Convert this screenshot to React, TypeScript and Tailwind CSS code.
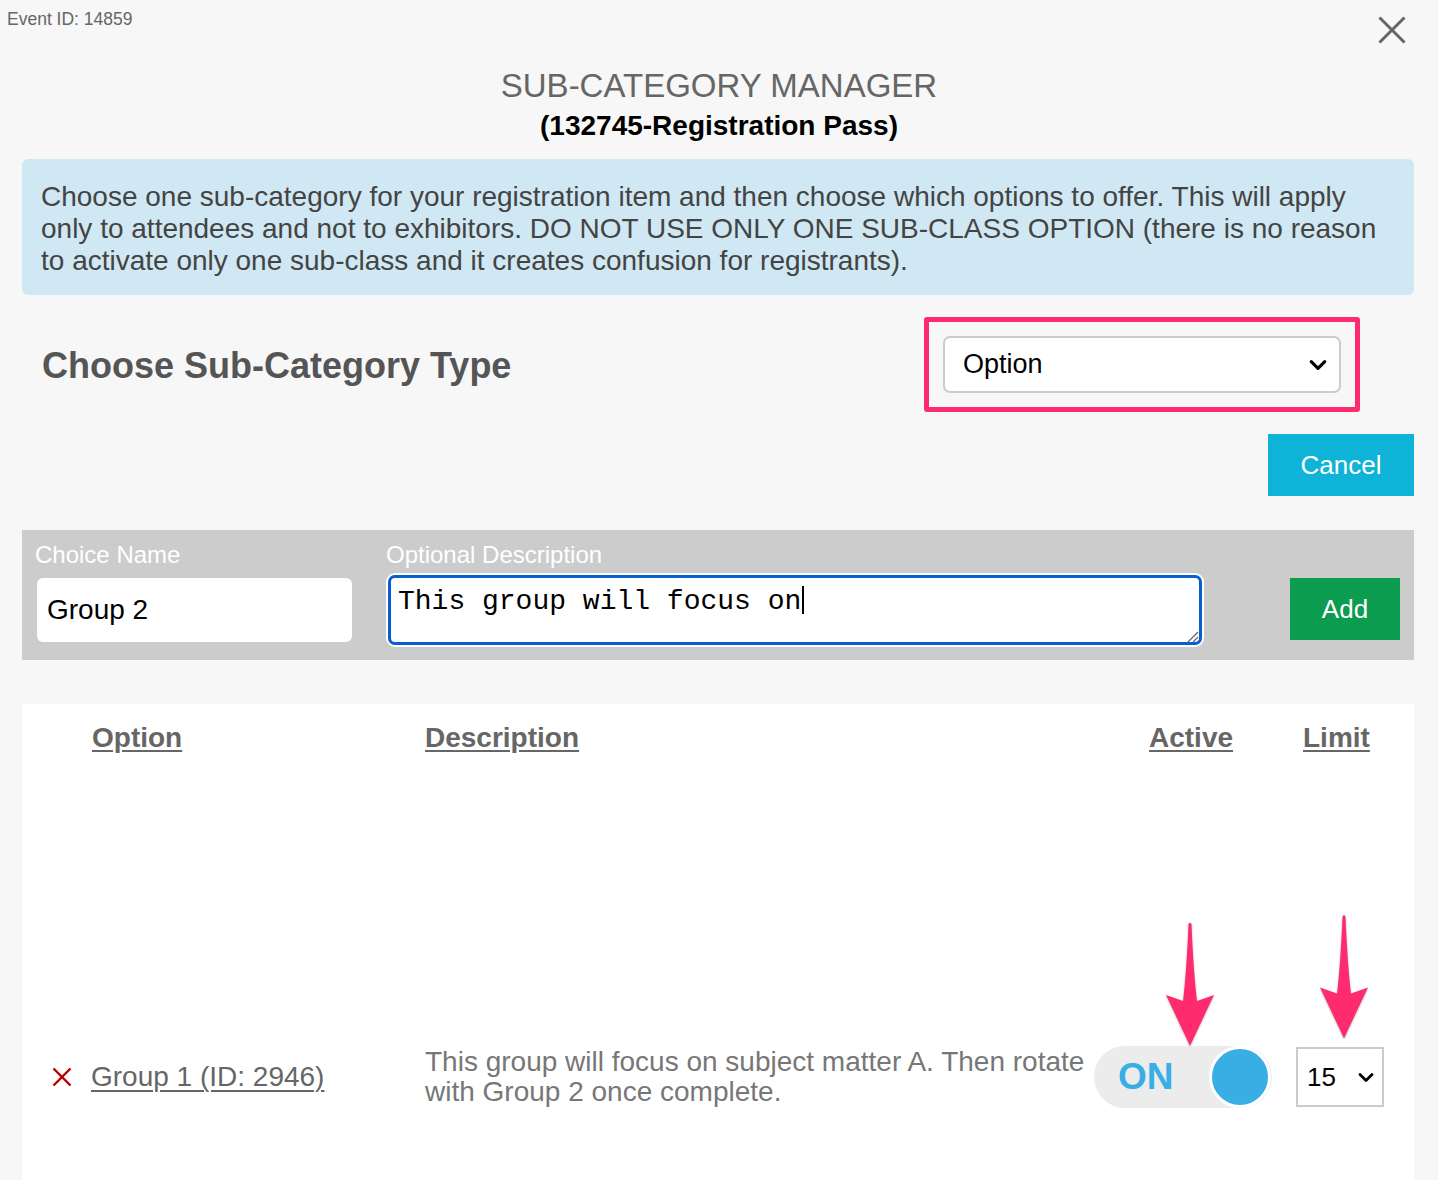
import React from "react";

const Chevron = ({ className = "" }: { className?: string }) => (
  <svg viewBox="0 0 16 10" className={className} fill="none">
    <polyline points="2,2 8,8 14,2" stroke="#000" strokeWidth="2.8" strokeLinecap="round" strokeLinejoin="round" />
  </svg>
);

const Arrow = ({ className = "" }: { className?: string }) => (
  <svg viewBox="0 0 48 125" className={className} style={{ filter: "drop-shadow(0 1px 1px rgba(0,0,0,0.25))" }}>
    <path
      d="M22.5 2 Q24 -0.5 25.5 2 Q27.5 50 31 79 L48 73 L24 124 L0 73 L17 79 Q20.5 50 22.5 2 Z"
      fill="#fe2c6e"
    />
  </svg>
);

export default function App() {
  return (
    <div
      className="relative w-[1438px] h-[1180px] overflow-hidden bg-[#f7f7f7]"
      style={{ fontFamily: '"Liberation Sans", Arial, sans-serif' }}
    >
      {/* header row */}
      <div className="flex justify-between items-start">
        <div className="pl-[7px] pt-[9px] text-[17.5px] leading-[20px] text-[#666]">Event ID: 14859</div>
        <button className="mt-[16px] mr-[32px] w-[28px] h-[28px]">
          <svg viewBox="0 0 28 28" className="w-[28px] h-[28px]">
            <line x1="1.5" y1="1.5" x2="26.5" y2="26.5" stroke="#666" strokeWidth="3" />
            <line x1="26.5" y1="1.5" x2="1.5" y2="26.5" stroke="#666" strokeWidth="3" />
          </svg>
        </button>
      </div>

      {/* title */}
      <div className="mt-[23px] text-center">
        <div className="text-[33px] leading-[38px] text-[#666]">SUB-CATEGORY MANAGER</div>
        <div className="mt-[4px] text-[28px] leading-[33px] font-bold text-black">(132745-Registration Pass)</div>
      </div>

      <div className="pl-[22px] pr-[24px]">
        {/* info box */}
        <div className="mt-[17px] h-[136px] rounded-[6px] bg-[#d0e8f3] pl-[19px] pr-[18px] pt-[22px] text-[28px] leading-[32px] text-[#444]">
          Choose one sub-category for your registration item and then choose which options to offer. This will apply only to attendees and not to exhibitors. DO NOT USE ONLY ONE SUB-CLASS OPTION (there is no reason to activate only one sub-class and it creates confusion for registrants).
        </div>

        {/* choose type */}
        <div className="mt-[22px] flex items-center justify-between">
          <div className="pl-[20px] pt-[2px] text-[36px] font-bold text-[#555]">Choose Sub-Category Type</div>
          <div className="mr-[54px] w-[436px] h-[95px] rounded-[3px] border-[5px] border-[#fe2c6e] p-[14px]">
            <div className="flex h-full items-center justify-between rounded-[7px] border-2 border-[#ccc] bg-white pl-[18px] pr-[12px]">
              <span className="text-[27px] text-black">Option</span>
              <Chevron className="w-[18px] h-[12px]" />
            </div>
          </div>
        </div>

        {/* cancel */}
        <div className="mt-[22px] flex justify-end">
          <button className="h-[62px] w-[146px] bg-[#10b3d8] text-[26px] text-white">Cancel</button>
        </div>

        {/* form bar */}
        <div className="mt-[34px] flex h-[130px] items-start bg-[#cccccc] pl-[13px] pt-[12px]">
          <div className="w-[317px]">
            <div className="text-[24px] leading-[26px] text-white">Choice Name</div>
            <div className="ml-[2px] mt-[10px] flex h-[64px] w-[315px] items-center rounded-[6px] bg-white pl-[10px] text-[28px] text-black">
              Group 2
            </div>
          </div>
          <div className="ml-[34px] w-[818px]">
            <div className="text-[24px] leading-[26px] text-white">Optional Description</div>
            <div className="relative mt-[5px] h-[74px] w-[818px] rounded-[9px] border-2 border-white">
              <div className="h-full w-full rounded-[7px] border-[3px] border-[#0a5fd0] bg-white pl-[7px] pt-[3px]">
                <span
                  className="text-[28px] leading-[30px] text-black"
                  style={{ fontFamily: '"Liberation Mono", "Courier New", monospace' }}
                >
                  This group will focus on
                </span>
                <span className="ml-[1px] inline-block h-[28px] w-[1.5px] translate-y-[5px] bg-black" />
              </div>
              <svg viewBox="0 0 14 14" className="absolute bottom-[2px] right-[3px] w-[14px] h-[14px]">
                <line x1="13" y1="3" x2="3" y2="13" stroke="#666" strokeWidth="1.3" />
                <line x1="13" y1="8" x2="8" y2="13" stroke="#666" strokeWidth="1.3" />
              </svg>
            </div>
          </div>
          <button className="ml-[86px] mt-[36px] h-[62px] w-[110px] bg-[#0c9c50] text-[26px] text-white">Add</button>
        </div>

        {/* table */}
        <div className="relative mt-[44px] h-[520px] bg-white pl-[26px]">
          <div className="grid grid-cols-[377px_669px_202px_88px] pt-[18px] text-[28px] leading-[32px] font-bold text-[#666]">
            <div className="pl-[44px]"><span className="underline underline-offset-[3px]">Option</span></div>
            <div><span className="underline underline-offset-[3px]">Description</span></div>
            <div className="pl-[55px]"><span className="underline underline-offset-[3px]">Active</span></div>
            <div className="pl-[7px]"><span className="underline underline-offset-[3px]">Limit</span></div>
          </div>

          <div className="mt-[292px] grid grid-cols-[377px_669px_202px_88px] items-center">
            <div className="flex items-center">
              <svg viewBox="0 0 20 20" className="ml-[4px] w-[20px] h-[20px]">
                <line x1="1.5" y1="1.5" x2="18.5" y2="18.5" stroke="#b80000" strokeWidth="2.4" />
                <line x1="18.5" y1="1.5" x2="1.5" y2="18.5" stroke="#b80000" strokeWidth="2.4" />
              </svg>
              <span className="ml-[19px] text-[28px] text-[#666] underline underline-offset-[4px] decoration-[1.5px]">
                Group 1 (ID: 2946)
              </span>
            </div>
            <div className="text-[28px] leading-[30px] text-[#777]">
              This group will focus on subject matter A. Then rotate with Group 2 once complete.
            </div>
            <div>
              <div className="flex h-[62px] w-[178px] items-center justify-between rounded-full bg-[#ececec] pl-[24px] pr-[1px]">
                <span className="text-[37px] font-bold text-[#38aee4]">ON</span>
                <div className="h-[62px] w-[62px] rounded-full border-[3px] border-white bg-[#38aee4]" />
              </div>
            </div>
            <div className="flex h-[60px] w-[88px] items-center justify-between border-2 border-[#ccc] bg-white pl-[9px] pr-[8px]">
              <span className="text-[26px] text-black">15</span>
              <Chevron className="w-[16px] h-[11px]" />
            </div>
          </div>

          <Arrow className="absolute left-[1144px] top-[218px] w-[48px] h-[125px]" />
          <Arrow className="absolute left-[1298px] top-[209px] w-[48px] h-[128px]" />
        </div>
      </div>
    </div>
  );
}
